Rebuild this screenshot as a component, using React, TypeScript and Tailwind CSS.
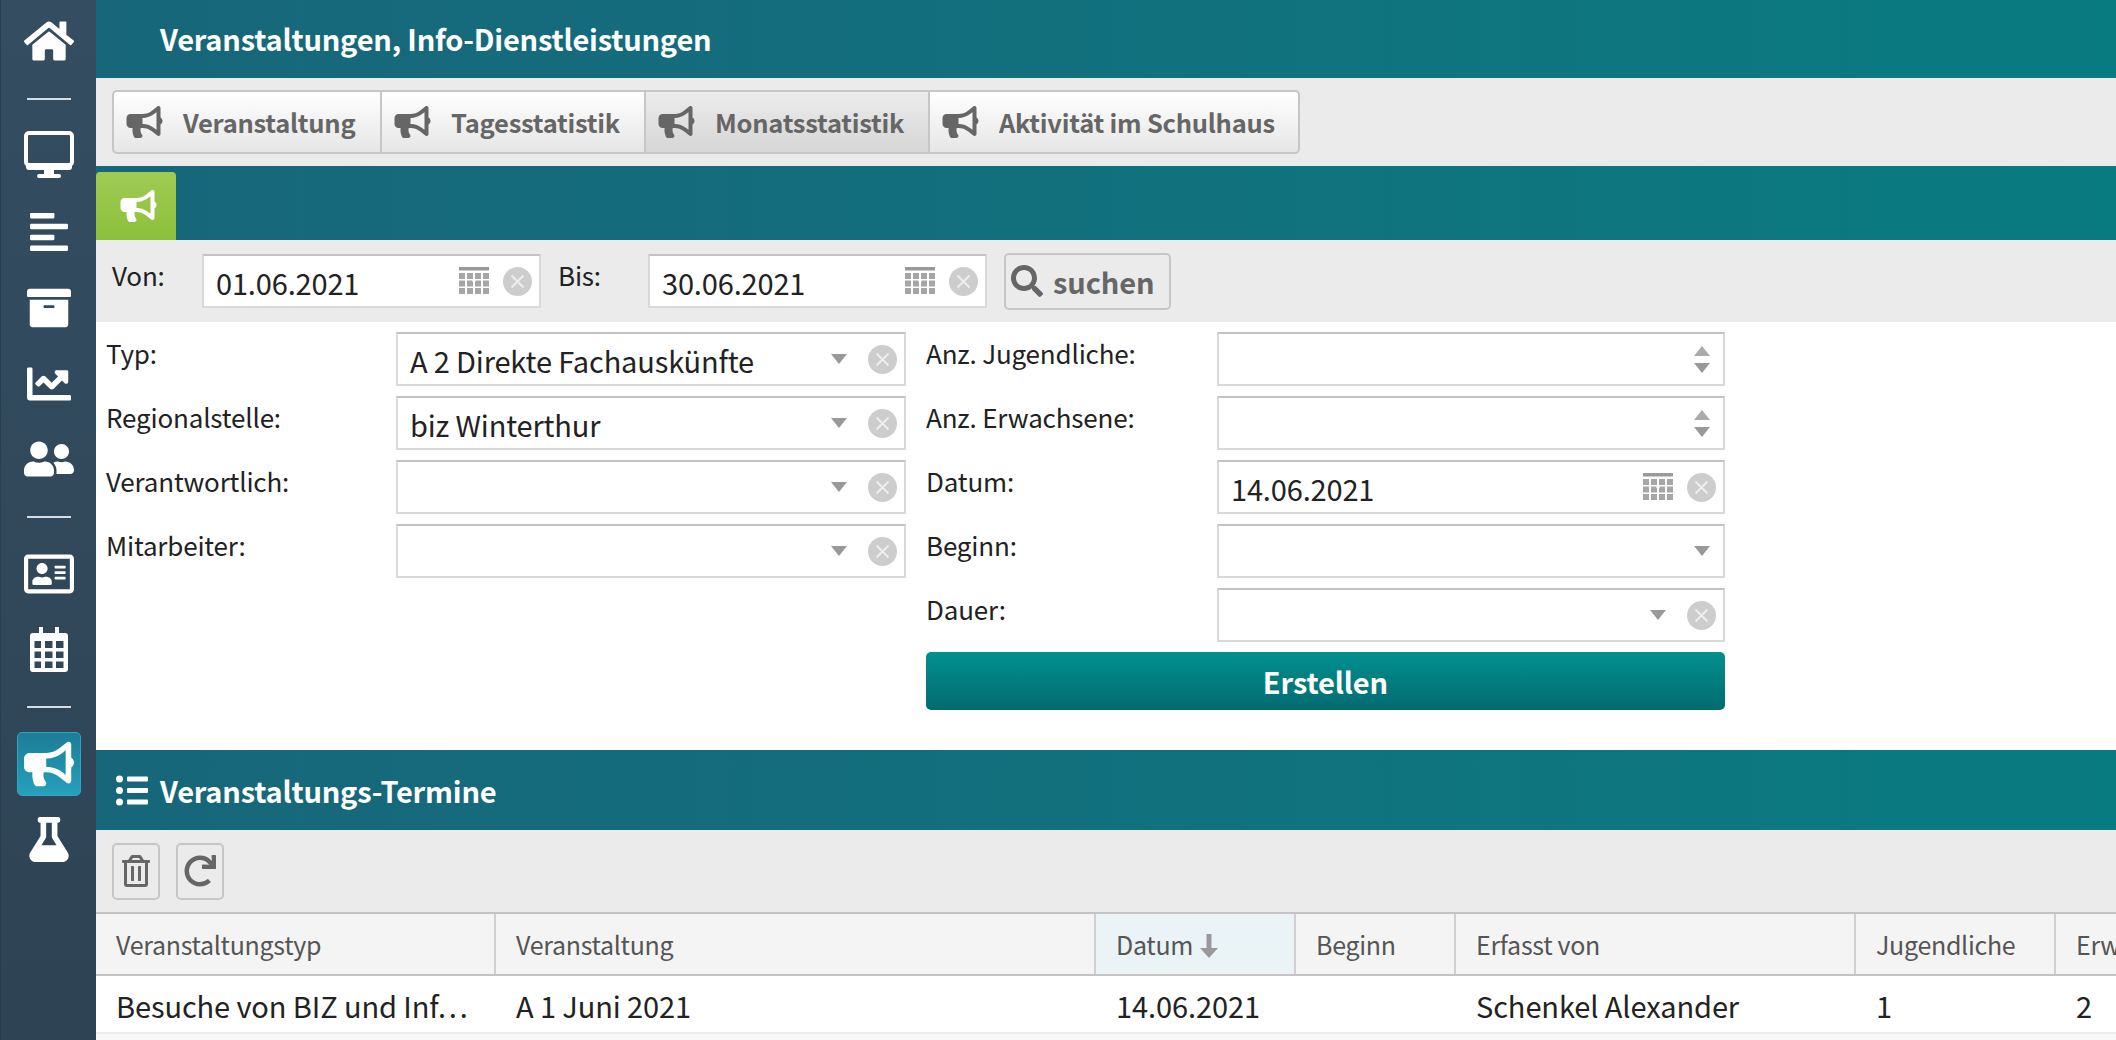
import { FaHome, FaAlignLeft, FaArchive, FaChartLine, FaUserFriends, FaRegAddressCard, FaBullhorn, FaFlask, FaSearch, FaRedo, FaRegTrashAlt } from 'react-icons/fa'

const font = "font-['Noto_Sans_CJK_SC','Source_Sans_Pro','Lato',sans-serif]"

function Monitor() {
  return (
    <svg viewBox="0 0 50 50" className="w-[50px] h-[50px]">
      <rect x="2" y="3" width="46" height="32" rx="3" fill="none" stroke="white" strokeWidth="4" />
      <path d="M2 33h46v4a3 3 0 0 1-3 3H5a3 3 0 0 1-3-3z" fill="white" />
      <path d="M20 39h10v5h5a2 2 0 0 1 0 4H15a2 2 0 0 1 0-4h5z" fill="white" />
    </svg>
  )
}

function CalendarNav() {
  return (
    <svg viewBox="0 0 38 45" className="w-[38px] h-[45px] mt-[28px]">
      <path
        fillRule="evenodd"
        fill="white"
        d="M9 0h4v6h12V0h4v6h6a3 3 0 0 1 3 3v33a3 3 0 0 1-3 3H3a3 3 0 0 1-3-3V9a3 3 0 0 1 3-3h6zM4.500 14v7H11v-7zM15 14v7h7.500v-7zM26 14v7h7.500v-7zM4.500 24.500V31H11v-6.500zM15 24.500V31h7.500v-6.500zM26 24.500V31h7.500v-6.500zM4.500 34.500V41H11v-6.500zM15 34.500V41h7.500v-6.500zM26 34.500V41h7.500v-6.500z"
      />
    </svg>
  )
}

function Divider({ className }: { className: string }) {
  return <div className={`w-[44px] h-[2px] bg-[#d5dce2] ${className}`} />
}

function Sidebar() {
  return (
    <aside className="w-[96px] shrink-0 h-full flex flex-col items-center bg-gradient-to-b from-[#344d61] to-[#2e4455] border-l border-[#2a3d4c]">
      <FaHome className="text-white w-[50px] h-[50px] mt-[16px]" />
      <Divider className="mt-[32px]" />
      <div className="mt-[30px] h-[50px]"><Monitor /></div>
      <FaAlignLeft className="text-white w-[38px] h-[44px] mt-[30px]" />
      <FaArchive className="text-white w-[44px] h-[44px] mt-[32px]" />
      <FaChartLine className="text-white w-[44px] h-[44px] mt-[32px]" />
      <FaUserFriends className="text-white w-[50px] h-[50px] mt-[28px]" />
      <Divider className="mt-[32px]" />
      <FaRegAddressCard className="text-white w-[50px] h-[50px] mt-[31px]" />
      <CalendarNav />
      <Divider className="mt-[34px]" />
      <div className="mt-[24px] w-[64px] h-[64px] rounded-[5px] border border-[#2fa6c4] bg-gradient-to-b from-[#1c7d96] to-[#25a0bd] flex items-center justify-center">
        <FaBullhorn className="text-white w-[50px] h-[50px]" />
      </div>
      <FaFlask className="text-white w-[40px] h-[45px] mt-[21px]" />
    </aside>
  )
}

function TabButton({ label, active, w }: { label: string; active?: boolean; w: string }) {
  return (
    <div className={`${w} h-[64px] flex items-center pl-[12px] border-y-2 border-r-2 first:border-l-2 border-[#c6c6c6] first:rounded-l-[5px] last:rounded-r-[5px] ${active ? 'bg-gradient-to-b from-[#ececec] to-[#d6d6d6]' : 'bg-gradient-to-b from-[#ffffff] to-[#e6e6e6]'}`}>
      <FaBullhorn className="w-[37px] h-[32px] text-[#666] shrink-0" />
      <span className="ml-[20px] text-[25.5px] tracking-[-0.25px] leading-none font-bold text-[#666] whitespace-nowrap">{label}</span>
    </div>
  )
}

function CalIcon() {
  const rows = [0, 1, 2]
  const cols = [0, 1, 2, 3]
  return (
    <svg viewBox="0 0 30 28" className="w-[30px] h-[28px] shrink-0">
      <rect x="0" y="0" width="30" height="3.500" fill="#999" />
      {rows.map((r) => cols.map((c) => <rect key={`${r}-${c}`} x={c * 8} y={6 + r * 7.5} width="6" height="6" fill="#a6a6a6" />))}
      <path d="M13 13.500h4v1h-4zM14.500 12h1v4h-1z" fill="white" />
    </svg>
  )
}

function ClearIcon() {
  return (
    <svg viewBox="0 0 29 29" className="w-[29px] h-[29px] shrink-0">
      <circle cx="14.500" cy="14.500" r="14.500" fill="#cdcdcd" />
      <path d="M8.500 8.500l12 12M20.500 8.500l-12 12" stroke="#eeeeee" strokeWidth="2" />
    </svg>
  )
}

function Caret() {
  return <svg viewBox="0 0 16 10" className="w-[16px] h-[10px] shrink-0"><path d="M0 0h16L8 10z" fill="#999" /></svg>
}

function Spinner() {
  return (
    <div className="flex flex-col items-center gap-[7px] mr-[6px]">
      <svg viewBox="0 0 16 10" className="w-[16px] h-[10px]"><path d="M0 10h16L8 0z" fill="#aaa" /></svg>
      <Caret />
    </div>
  )
}

function Field({ children, value, w }: { children?: React.ReactNode; value?: string; w: string }) {
  return (
    <div className={`${w} h-[54px] flex items-center bg-white border-2 border-[#d9d9d9] border-t-[#c2c2c2] pl-[12px] pr-[7px] shrink-0`}>
      <span className="flex-1 text-[29px] tracking-[-0.16px] leading-none text-[#222] pt-[3px] whitespace-nowrap">{value}</span>
      {children}
    </div>
  )
}

function SelectField({ value }: { value?: string }) {
  return (
    <Field value={value} w="w-[510px]">
      <Caret />
      <div className="w-[21px]" />
      <ClearIcon />
    </Field>
  )
}

function DateField({ value, w }: { value: string; w: string }) {
  return (
    <Field value={value} w={w}>
      <CalIcon />
      <div className="w-[14px]" />
      <ClearIcon />
    </Field>
  )
}

function Row({ label, labelW, children }: { label: string; labelW: string; children: React.ReactNode }) {
  return (
    <div className="flex items-start">
      <div className={`${labelW} shrink-0 text-[26px] tracking-[-0.18px] leading-none pt-[8px] text-[#222]`}>{label}</div>
      {children}
    </div>
  )
}

function ListIcon() {
  return (
    <svg viewBox="0 0 32 31" className="w-[32px] h-[31px] shrink-0">
      <circle cx="3.500" cy="4" r="3.500" fill="white" />
      <circle cx="3.500" cy="15.500" r="3.500" fill="white" />
      <circle cx="3.500" cy="27" r="3.500" fill="white" />
      <rect x="11" y="1.500" width="21" height="5" rx="1" fill="white" />
      <rect x="11" y="13" width="21" height="5" rx="1" fill="white" />
      <rect x="11" y="24.500" width="21" height="5" rx="1" fill="white" />
    </svg>
  )
}

function SortArrow() {
  return (
    <svg viewBox="0 0 18 24" className="ml-[7px] w-[18px] h-[24px] mt-[3px] shrink-0">
      <path d="M6.500 0h5v14H18l-9 10-9-10h6.500z" fill="#999" />
    </svg>
  )
}

const cols = [
  { w: 'w-[400px]', head: 'Veranstaltungstyp', cell: 'Besuche von BIZ und Inf…' },
  { w: 'w-[600px]', head: 'Veranstaltung', cell: 'A 1 Juni 2021' },
  { w: 'w-[200px]', head: 'Datum', cell: '14.06.2021', sorted: true },
  { w: 'w-[160px]', head: 'Beginn', cell: '' },
  { w: 'w-[400px]', head: 'Erfasst von', cell: 'Schenkel Alexander' },
  { w: 'w-[200px]', head: 'Jugendliche', cell: '1' },
  { w: 'w-[200px]', head: 'Erwachsene', cell: '2' },
]

export default function App() {
  return (
    <div className={`${font} w-full h-[1040px] flex overflow-hidden bg-white`}>
      <Sidebar />
      <main className="flex-1 min-w-0 flex flex-col">
        <header className="h-[78px] bg-gradient-to-r from-[#17667a] to-[#087b80] flex items-center pl-[64px]">
          <h1 className="text-[29px] tracking-[-0.2px] leading-none font-bold text-white -mt-[2px]">Veranstaltungen, Info-Dienstleistungen</h1>
        </header>
        <div className="h-[88px] bg-[#ebebeb] flex items-center pl-[16px]">
          <div className="flex">
            <TabButton label="Veranstaltung" w="w-[270px]" />
            <TabButton label="Tagesstatistik" w="w-[264px]" />
            <TabButton label="Monatsstatistik" w="w-[284px]" active />
            <TabButton label="Aktivität im Schulhaus" w="w-[370px]" />
          </div>
        </div>
        <div className="h-[74px] bg-gradient-to-r from-[#17667a] to-[#087b80] flex items-end">
          <div className="w-[80px] h-[68px] pl-[4px] rounded-t-[4px] bg-gradient-to-b from-[#9fcb52] to-[#8cc03c] flex items-center justify-center">
            <FaBullhorn className="w-[37px] h-[32px] text-white" />
          </div>
        </div>
        <div className="h-[82px] bg-[#ebebeb] flex items-center">
          <span className="w-[106px] pl-[16px] text-[26px] tracking-[-0.18px] leading-none text-[#222] shrink-0 -mt-[12px]">Von:</span>
          <DateField value="01.06.2021" w="w-[339px]" />
          <span className="w-[107px] pl-[17px] text-[26px] tracking-[-0.18px] leading-none text-[#222] shrink-0 -mt-[12px]">Bis:</span>
          <DateField value="30.06.2021" w="w-[339px]" />
          <div className="ml-[17px] w-[167px] h-[57px] pl-[5px] rounded-[5px] border-2 border-[#c6c6c6] flex items-center gap-[10px] bg-[#ebebeb]">
            <FaSearch className="w-[32px] h-[32px] text-[#666]" />
            <span className="text-[29px] tracking-[-0.1px] leading-none font-bold text-[#666]">suchen</span>
          </div>
        </div>
        <div className="h-[428px] flex pt-[10px] pl-[10px]">
          <div className="flex flex-col gap-[10px] w-[820px] shrink-0">
            <Row label="Typ:" labelW="w-[290px]"><SelectField value="A 2 Direkte Fachauskünfte" /></Row>
            <Row label="Regionalstelle:" labelW="w-[290px]"><SelectField value="biz Winterthur" /></Row>
            <Row label="Verantwortlich:" labelW="w-[290px]"><SelectField /></Row>
            <Row label="Mitarbeiter:" labelW="w-[290px]"><SelectField /></Row>
          </div>
          <div className="flex flex-col gap-[10px] w-[799px]">
            <Row label="Anz. Jugendliche:" labelW="w-[291px]"><Field w="w-[508px]"><Spinner /></Field></Row>
            <Row label="Anz. Erwachsene:" labelW="w-[291px]"><Field w="w-[508px]"><Spinner /></Field></Row>
            <Row label="Datum:" labelW="w-[291px]"><DateField value="14.06.2021" w="w-[508px]" /></Row>
            <Row label="Beginn:" labelW="w-[291px]"><Field w="w-[508px]"><div className="mr-[6px]"><Caret /></div></Field></Row>
            <Row label="Dauer:" labelW="w-[291px]"><Field w="w-[508px]"><Caret /><div className="w-[21px]" /><ClearIcon /></Field></Row>
            <button className="h-[58px] rounded-[5px] bg-gradient-to-b from-[#02908f] to-[#036b70] text-white text-[29px] tracking-[-0.1px] leading-none font-bold">Erstellen</button>
          </div>
        </div>
        <div className="h-[80px] bg-gradient-to-r from-[#17667a] to-[#087b80] flex items-center pl-[20px]">
          <ListIcon />
          <h2 className="ml-[12px] text-[29px] tracking-[-0.2px] leading-none font-bold text-white">Veranstaltungs-Termine</h2>
        </div>
        <div className="h-[82px] bg-[#ebebeb] flex items-center pl-[16px] gap-[16px]">
          <div className="w-[48px] h-[57px] rounded-[5px] border-2 border-[#c6c6c6] flex items-center justify-center">
            <FaRegTrashAlt className="w-[28px] h-[32px] text-[#666]" />
          </div>
          <div className="w-[48px] h-[57px] rounded-[5px] border-2 border-[#c6c6c6] flex items-center justify-center">
            <FaRedo className="w-[32px] h-[32px] text-[#666]" />
          </div>
        </div>
        <div className="flex h-[64px] bg-[#f4f4f4] border-y-2 border-[#c4c4c4]">
          {cols.map((c) => (
            <div key={c.head} className={`${c.w} shrink-0 flex items-center pl-[20px] border-r-2 border-[#d0d0d0] text-[25px] tracking-[-0.3px] leading-none text-[#555] ${c.sorted ? 'bg-[#eaf4f6]' : ''}`}>
              <span>{c.head}</span>
              {c.sorted && <SortArrow />}
            </div>
          ))}
        </div>
        <div className="flex h-[58px] bg-white border-b-2 border-[#ededed]">
          {cols.map((c) => (
            <div key={c.head} className={`${c.w} shrink-0 flex items-center pl-[20px] pt-[2px] text-[29px] tracking-[-0.1px] leading-none text-[#222] whitespace-nowrap`}>{c.cell}</div>
          ))}
        </div>
        <div className="flex-1 bg-[#f8f8f8]" />
      </main>
    </div>
  )
}
